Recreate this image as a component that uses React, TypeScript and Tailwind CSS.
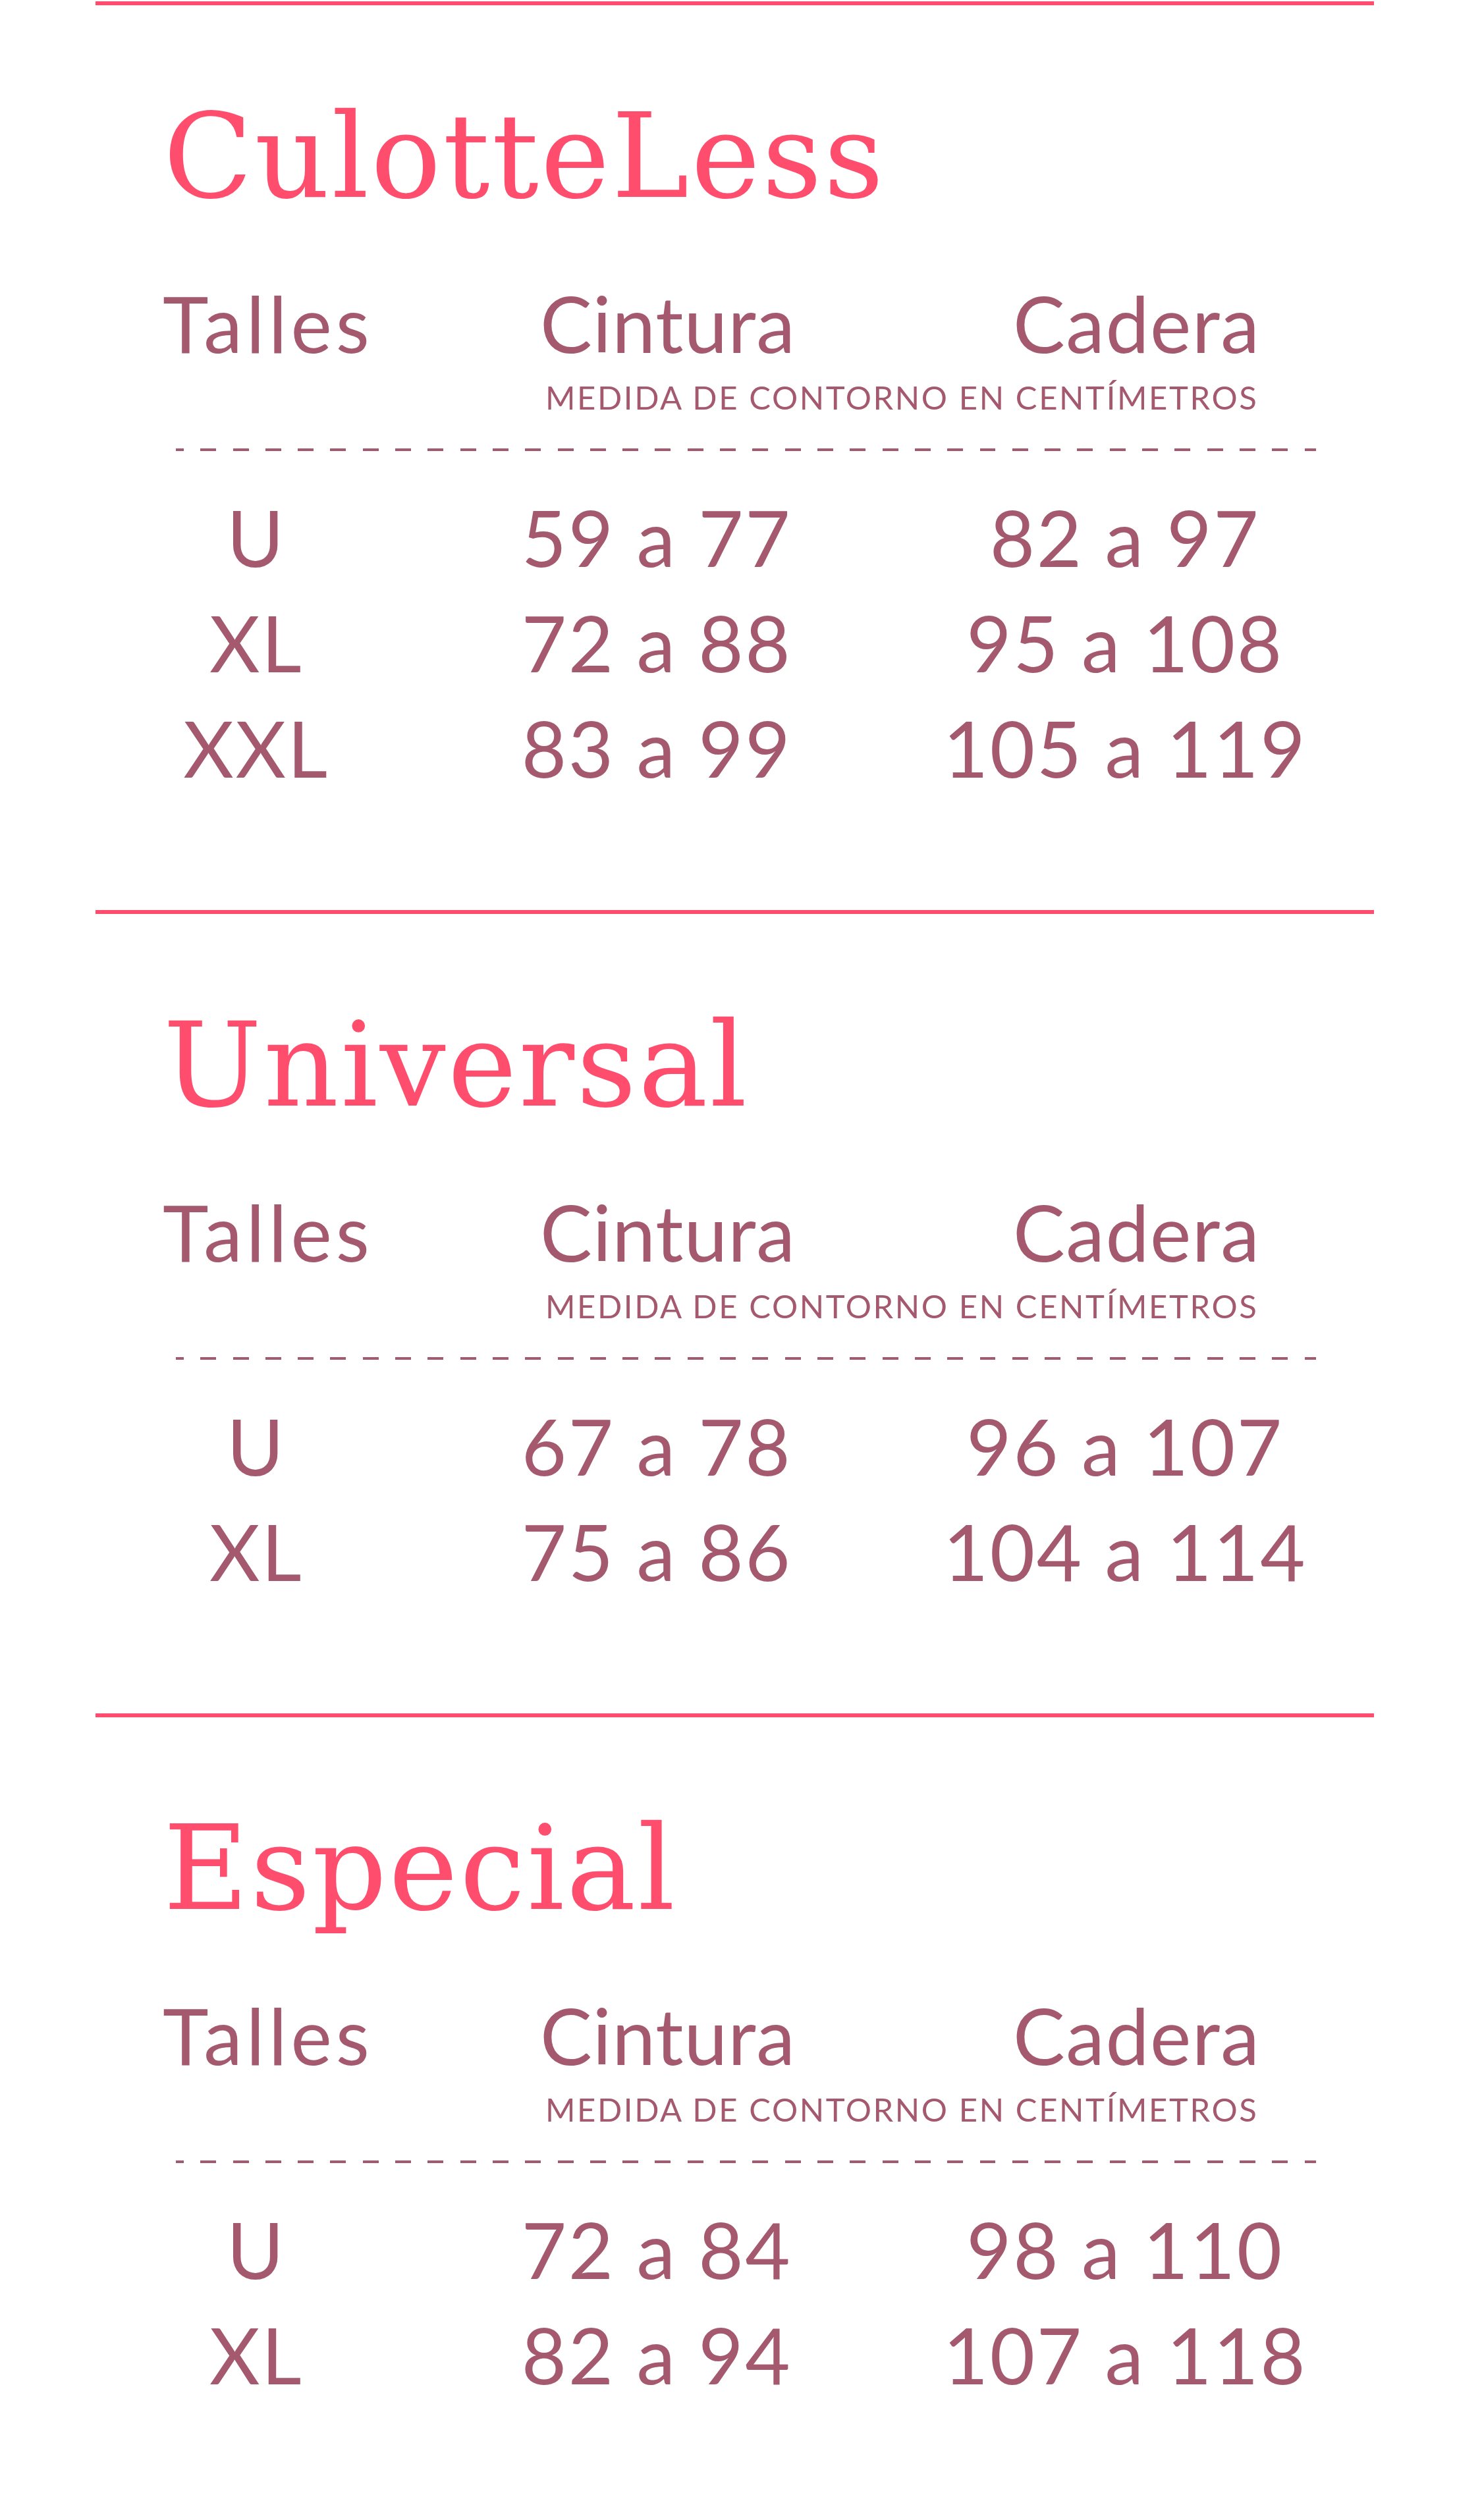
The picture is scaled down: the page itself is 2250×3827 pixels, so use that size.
import React from "react";

type Section = { title: string; rows: [string, string, string][] };

const sections: Section[] = [
  {
    title: "CulotteLess",
    rows: [
      ["U", "59 a 77", "82 a 97"],
      ["XL", "72 a 88", "95 a 108"],
      ["XXL", "83 a 99", "105 a 119"],
    ],
  },
  {
    title: "Universal",
    rows: [
      ["U", "67 a 78", "96 a 107"],
      ["XL", "75 a 86", "104 a 114"],
    ],
  },
  {
    title: "Especial",
    rows: [
      ["U", "72 a 84", "98 a 110"],
      ["XL", "82 a 94", "107 a 118"],
    ],
  },
];

const body = "font-['Lato','Noto_Sans',sans-serif]";

function SizeSection({ s }: { s: Section }) {
  return (
    <section className="border-t-[6px] border-[#ff4d6e] pb-[166px]">
      <h2 className="mt-[142px] pl-[103px] font-['DejaVu_Serif','Liberation_Serif',serif] text-[177px] leading-[177px] font-normal tracking-[3px] text-[#ff4d6e]">
        {s.title}
      </h2>
      <div className={`mt-[84px] flex pl-[102px] text-[118px] leading-[160px] text-[#a4596e] ${body}`}>
        <div className="w-[573px] tracking-[6px]">Talles</div>
        <div className="w-[718px] tracking-[1px]">Cintura</div>
        <div className="tracking-[1.5px]">Cadera</div>
      </div>
      <div className={`mt-[2px] pl-[683px] text-[49px] leading-[60px] tracking-[2.6px] text-[#a4596e] ${body}`}>
        MEDIDA DE CONTORNO EN CENTÍMETROS
      </div>
      <div className="ml-[122px] mt-[48px] h-[4px] w-[1731px] bg-[repeating-linear-gradient(90deg,#a4596e_0_12px,transparent_12px_37.3px,#a4596e_37.3px_49.3px)]" />
      <div className={`mt-[51px] grid grid-cols-[488px_728px_694px] text-center text-[118px] leading-[160px] tracking-[2.5px] text-[#a4596e] ${body}`}>
        {s.rows.map((r, i) => (
          <React.Fragment key={i}>
            <div>{r[0]}</div>
            <div>{r[1]}</div>
            <div>{r[2]}</div>
          </React.Fragment>
        ))}
      </div>
    </section>
  );
}

export default function App() {
  return (
    <div className="w-[2250px] min-h-[3827px] bg-white pt-[2px]">
      <div className="mx-[145px] w-[1941px]">
        {sections.map((s) => (
          <SizeSection key={s.title} s={s} />
        ))}
      </div>
    </div>
  );
}
